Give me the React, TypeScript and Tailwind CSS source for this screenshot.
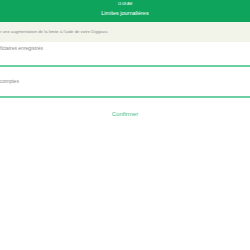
export default function App() {
  return (
    <div className="flex h-[250px] w-[250px] flex-col overflow-hidden bg-white font-['Liberation_Sans',Arial,sans-serif]">
      <div className="flex h-[22px] flex-col items-center bg-[#0fa45c] text-white">
        <div className="mt-[2px] text-[3.5px] leading-[5px]">11:08 AM</div>
        <div className="mt-[3px] text-[5.5px] leading-[7px]">Limites journalières</div>
      </div>
      <div className="flex h-[20px] items-center bg-[#f2f4ea] text-[4.3px] text-[#8a8a8a]">
        <span className="whitespace-nowrap">r une augmentation de la limite à l'aide de votre Digipass</span>
      </div>
      <div className="flex h-[25px] items-start border-b-2 border-[#6ccf9f] pt-[3px] text-[5px] text-[#8a8a8a]">
        <span className="whitespace-nowrap">ficiaires enregistrés</span>
      </div>
      <div className="flex h-[31px] items-center border-b-2 border-[#6dd0a4] text-[5px] text-[#8a8a8a]">
        <span className="whitespace-nowrap">comptes</span>
      </div>
      <div className="mt-[12px] text-center text-[6px] text-[#3fbf86]">Confirmer</div>
    </div>
  );
}
